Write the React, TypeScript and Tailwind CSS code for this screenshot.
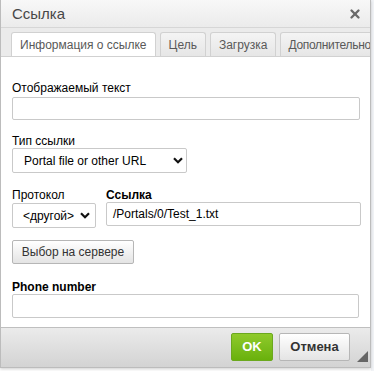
import { X } from 'lucide-react';

const Label = ({ children, bold = false }: { children: React.ReactNode; bold?: boolean }) => (
  <div className={`text-[12px] leading-[14px] text-black whitespace-nowrap ${bold ? 'font-bold' : ''}`}>{children}</div>
);

const Chevron = () => (
  <svg width="10" height="7" viewBox="0 0 10 7" className="shrink-0">
    <path d="M1 1.2 L5 5.2 L9 1.2" stroke="#111" strokeWidth="2.2" fill="none" />
  </svg>
);

const Tab = ({ label, active = false, tight = false }: { label: string; active?: boolean; tight?: boolean }) => (
  <div
    className={`shrink-0 whitespace-nowrap flex items-center border border-[#d1d1d1] border-b-0 rounded-t-[3px] text-[12px] text-[#595959] ${
      tight ? 'pl-[7px] pr-[8px] tracking-[-0.3px]' : 'px-[8px]'
    } ${active ? 'h-[25px] bg-white -mb-px' : 'h-[24px] bg-gradient-to-b from-[#f4f4f4] to-[#e6e6e6]'}`}
  >
    {label}
  </div>
);

export default function App() {
  return (
    <div className="w-[374px] h-[371px] bg-white relative overflow-hidden font-['Liberation_Sans',Arial,sans-serif]">
      {/* page behind the dialog */}
      <div className="absolute right-0 top-0 w-[3px] h-full bg-[#f2f4f7]" />

      <div className="absolute left-0 top-0 w-[371px] h-[368px] flex flex-col border border-[#bcbcbc] border-t-0 shadow-[0_1px_3px_rgba(0,0,0,0.2)] bg-white overflow-hidden">
        {/* Title bar */}
        <div className="h-[28px] shrink-0 flex items-center justify-between pl-[11px] pr-[8px] bg-gradient-to-b from-[#f8f8f8] to-[#ebebeb] border-b border-[#d6d6d6]">
          <span className="text-[15px] text-[#474747] leading-none">Ссылка</span>
          <X size={14} strokeWidth={4} className="text-[#6a6a6a]" />
        </div>

        {/* Tabs */}
        <div className="h-[29px] shrink-0 flex items-end gap-[4px] pl-[10px] bg-[#ebebeb] border-b border-[#d1d1d1] overflow-hidden">
          <Tab label="Информация о ссылке" active />
          <Tab label="Цель" />
          <Tab label="Загрузка" />
          <Tab label="Дополнительно" tight />
        </div>

        {/* Content */}
        <div className="flex-1 flex flex-col pl-[11px] pt-[24px] text-black">
          <Label>Отображаемый текст</Label>
          <div className="mt-[2px] h-[23px] w-[348px] border border-[#c9c9c9] rounded-[2px] bg-white" />

          <div className="mt-[14px]">
            <Label>Тип ссылки</Label>
          </div>
          <div className="h-[25px] w-[175px] border border-[#c9c9c9] rounded-[2px] bg-white flex items-center justify-between pl-[11px] pr-[3px] text-[12px]">
            <span>Portal file or other URL</span>
            <Chevron />
          </div>

          <div className="mt-[15px] flex gap-[10px]">
            <div className="flex flex-col">
              <Label>Протокол</Label>
              <div className="mt-[1px] h-[25px] w-[84px] border border-[#c9c9c9] rounded-[2px] bg-white flex items-center justify-between pl-[10px] pr-[5px] text-[12px]">
                <span>&lt;другой&gt;</span>
                <Chevron />
              </div>
            </div>
            <div className="flex flex-col">
              <Label bold>Ссылка</Label>
              <div className="h-[24px] w-[255px] border border-[#c9c9c9] rounded-[2px] bg-white flex items-center pl-[6px] text-[12px]">
                /Portals/0/Test_1.txt
              </div>
            </div>
          </div>

          <div className="mt-[12px] h-[24px] w-[122px] border border-[#b6b6b6] rounded-[2px] bg-gradient-to-b from-[#ffffff] to-[#e4e4e4] flex items-center justify-center text-[12px] text-[#333]">
            Выбор на сервере
          </div>

          <div className="mt-[16px]">
            <Label bold>Phone number</Label>
          </div>
          <div className="h-[24px] w-[347px] border border-[#c9c9c9] rounded-[2px] bg-white" />
        </div>

        {/* Footer */}
        <div className="h-[40px] shrink-0 relative flex items-start pt-[5px] justify-end gap-[6px] pr-[20px] bg-gradient-to-b from-[#ebebeb] to-[#d3d3d3] border-t border-[#bfbfbf]">
          <div className="h-[28px] w-[42px] rounded-[2px] border border-[#6ba81e] bg-gradient-to-b from-[#8fca2a] to-[#69b10b] flex items-center justify-center text-[13px] font-bold text-white">
            OK
          </div>
          <div className="h-[28px] w-[71px] rounded-[2px] border border-[#b6b6b6] bg-gradient-to-b from-[#ffffff] to-[#e4e4e4] flex items-center justify-center text-[13px] font-bold text-[#333]">
            Отмена
          </div>
          <svg width="11" height="11" viewBox="0 0 11 11" className="absolute right-[2px] bottom-[5px]">
            <polygon points="11,0 11,11 0,11" fill="#666" />
          </svg>
        </div>
      </div>
    </div>
  );
}
